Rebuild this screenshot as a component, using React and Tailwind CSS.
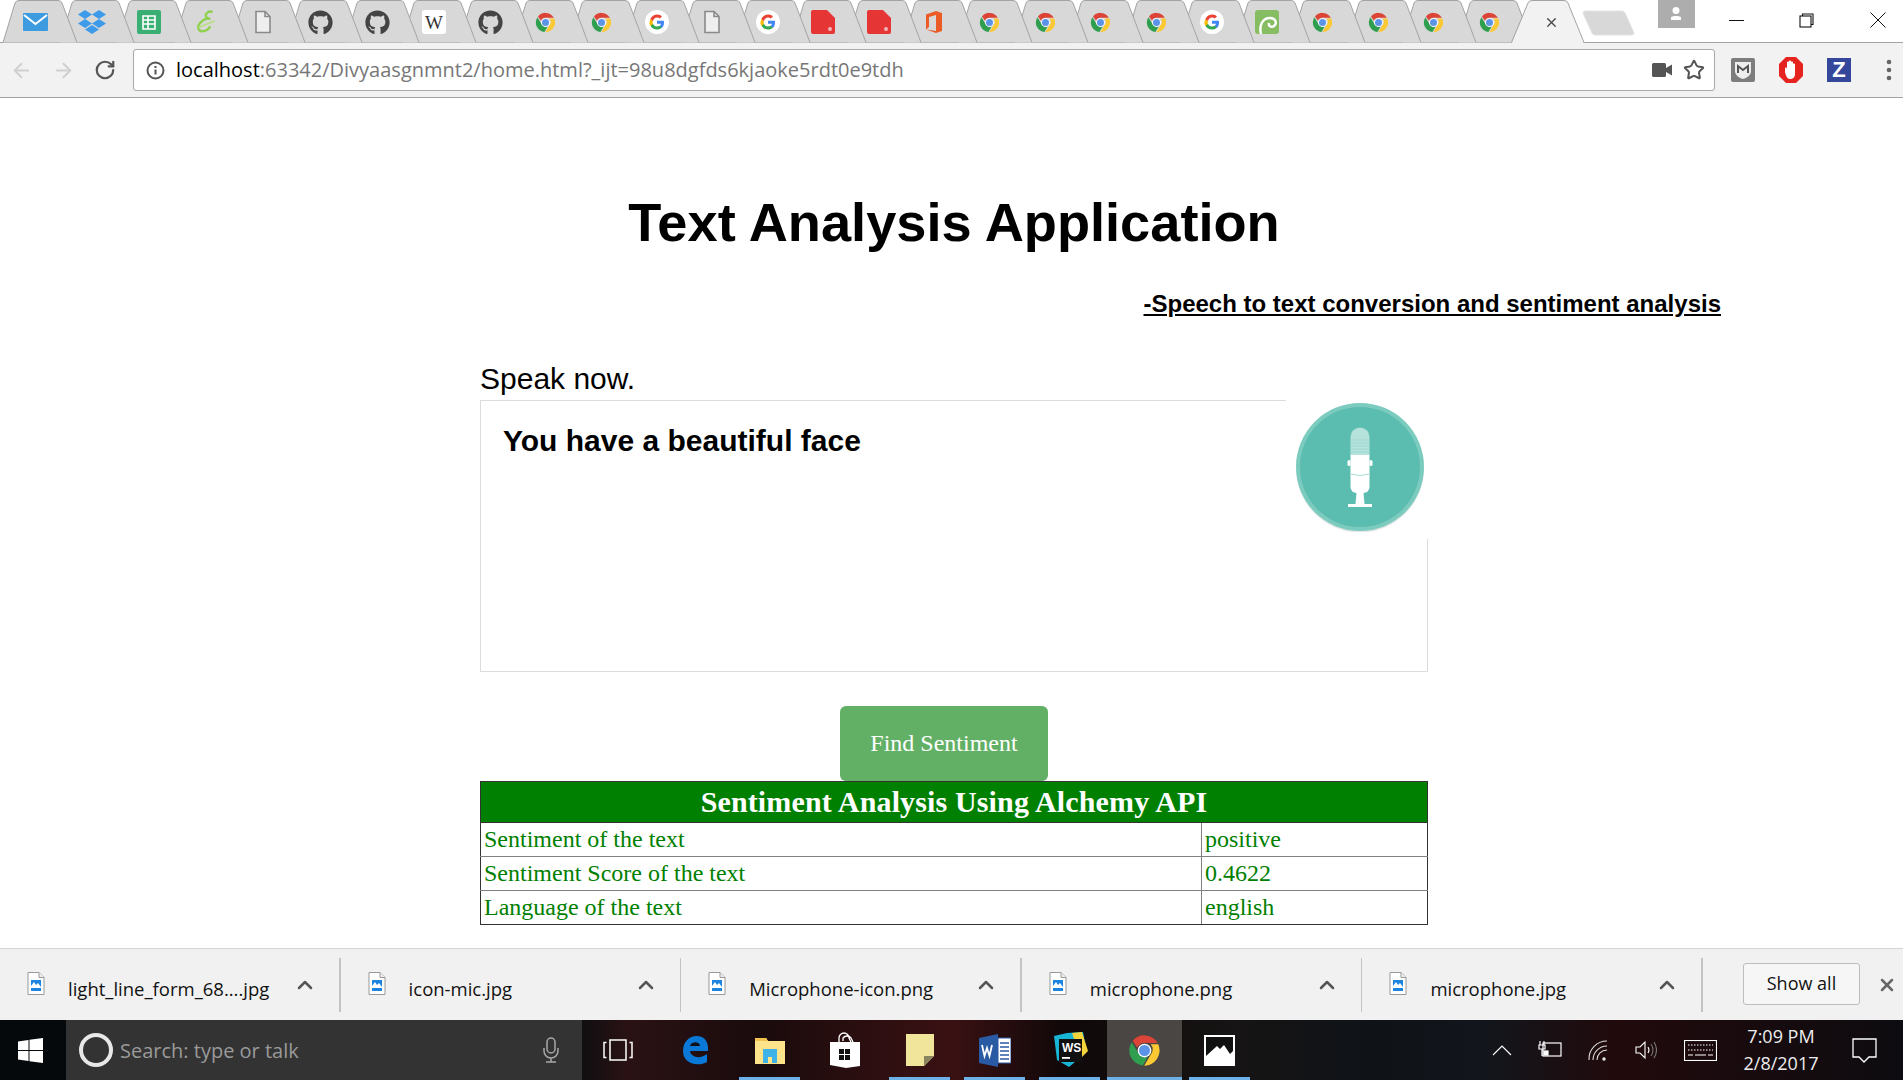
import React from 'react';
import { FaGithub, FaDropbox } from 'react-icons/fa';
import { ArrowLeft, ArrowRight, RotateCw, Star, X, ChevronUp } from 'lucide-react';

const Chrome = ({ s = 21 }) => (
  <svg width={s} height={s} viewBox="0 0 48 48">
    <path d="M24 2a22 22 0 0 1 19.05 11H24a11 11 0 0 0-10.3 7.1L6.8 10A22 22 0 0 1 24 2z" fill="#db4437" />
    <path d="M5.5 12 A22 22 0 0 0 21.5 45.9L29 33a11 11 0 0 1-14-5.5z" fill="#2f9e4f" />
    <path d="M44 15a22 22 0 0 1-20.5 31L33 30a11 11 0 0 0 0-15z" fill="#fcc934" />
    <circle cx="24" cy="24" r="10" fill="#fff" />
    <circle cx="24" cy="24" r="8" fill="#5b93e6" />
  </svg>
);

const GoogleG = () => (
  <svg width="24" height="24" viewBox="0 0 48 48">
    <circle cx="24" cy="24" r="24" fill="#fff" />
    <path d="M38 24.5c0-1-.1-2-.3-3H24v6h8c-.4 2-1.5 3.600-3.200 4.800l5 3.900c3-2.700 4.200-6.800 4.200-11.700z" fill="#4285f4" />
    <path d="M24 39c4 0 7.400-1.300 9.800-3.600l-5-3.900c-1.300.9-3 1.500-4.800 1.500-3.800 0-7-2.600-8.200-6l-5.100 4C13.100 35.800 18.200 39 24 39z" fill="#34a853" />
    <path d="M15.800 27.800a9 9 0 0 1 0-6l-5.100-4a15 15 0 0 0 0 14z" fill="#fbbc05" />
    <path d="M24 14.900c2.200 0 4.100.8 5.600 2.200l4.300-4.300A14.800 14.800 0 0 0 10.700 17.800l5.100 4c1.200-3.500 4.400-6.900 8.200-6.900z" fill="#ea4335" />
  </svg>
);

const Doc = () => (
  <svg width="18" height="24" viewBox="0 0 18 24" fill="#eeeeee" stroke="#8a8a8a" strokeWidth="1.6">
    <path d="M2 1.500h9l5 5v16H2z" />
    <path d="M11 1.500v5h5" fill="none" />
  </svg>
);

const RedDoc = () => (
  <svg width="24" height="24" viewBox="0 0 24 24">
    <path d="M2 0h14l8 8v14a2 2 0 0 1-2 2H2a2 2 0 0 1-2-2V2a2 2 0 0 1 2-2z" fill="#e53535" />
    <circle cx="19" cy="19" r="2" fill="#f4b5b5" />
  </svg>
);

const Mail = () => (
  <svg width="25" height="18" viewBox="0 0 25 18">
    <rect width="25" height="18" rx="1" fill="#3d9be0" />
    <path d="M1 2l11.500 9L24 2" fill="none" stroke="#fff" strokeWidth="2" />
  </svg>
);

const Sheets = () => (
  <svg width="24" height="24" viewBox="0 0 24 24">
    <rect width="24" height="24" rx="2" fill="#3aaf74" />
    <path d="M6 6h12v13H6zM6 10h12M6 14h12M11 6v13" fill="none" stroke="#fff" strokeWidth="1.600" />
  </svg>
);

const Swirl = () => (
  <svg width="26" height="26" viewBox="0 0 24 24" fill="none">
    <path d="M18 3c-3-2-7 1-6 4 .5 2 4 2 3 2-5-1-11 5-10 9 1 4 8 3 11-2" stroke="#8fd14f" strokeWidth="2.200" />
    <path d="M5 17l15-6" stroke="#b6e07e" strokeWidth="1.500" />
  </svg>
);

const Wiki = () => (
  <span className="flex h-[24px] w-[24px] items-center justify-center rounded-[3px] bg-white text-[19px] leading-none text-[#333]" style={{ fontFamily: '"Liberation Serif", serif' }}>W</span>
);

const Office = () => (
  <svg width="18" height="24" viewBox="0 0 18 24">
    <path d="M1 4.500L11 1l6 2v18l-6 2-10-3.500L11 21V5L4 7v10l-3 2.500z" fill="#eb5b25" />
  </svg>
);

const GreenSwirl = () => (
  <svg width="24" height="24" viewBox="0 0 24 24" fill="none">
    <rect width="24" height="24" rx="3" fill="#86bd63" />
    <path d="M6 24c-2-8 1-16 9-16 5 0 7 4 5 7s-7 2-6-2" stroke="#fff" strokeWidth="2.400" />
  </svg>
);

const Octo = () => <FaGithub size={25} color="#444" />;

const favicons = [
  <Mail />, <FaDropbox size={28} color="#3d9be9" />, <Sheets />, <Swirl />, <Doc />, <Octo />, <Octo />, <Wiki />, <Octo />,
  <Chrome />, <Chrome />, <GoogleG />, <Doc />, <GoogleG />, <RedDoc />, <RedDoc />, <Office />, <Chrome />, <Chrome />,
  <Chrome />, <Chrome />, <GoogleG />, <GreenSwirl />, <Chrome />, <Chrome />, <Chrome />, <Chrome />,
];

function Tab({ icon, z, wide }) {
  return (
    <div className={`relative flex h-[42px] shrink-0 items-center justify-center pt-[2px] ${wide ? 'w-[57px]' : 'w-[55.500px]'}`} style={{ zIndex: z }}>
      <svg className="absolute left-[-5px] top-0" width="78" height="43" viewBox="0 0 78 43">
        <path d="M1 42.500L13 3Q14 .5 17 .5L56 .5Q59 .5 60 3L75 42.500" fill="#d8d8d8" stroke="#a3a3a3" />
      </svg>
      <span className="relative flex items-center justify-center">{icon}</span>
    </div>
  );
}

function TabStrip() {
  return (
    <div className="flex h-[42px] shrink-0 bg-white pl-[6.500px]">
      {favicons.map((f, i) => <Tab key={i} icon={f} z={40 - i} wide={i < 8} />)}
      <div className="relative z-50 ml-[-1.500px] flex h-[42px] w-[60px] shrink-0 items-center justify-center pt-[2px]">
        <svg className="absolute left-[-5.500px] top-0" width="78" height="44" viewBox="0 0 78 44">
          <path d="M1.500 44L18 3Q19 .5 22 .5L54 .5Q57 .5 58 3L74 44z" fill="#f2f2f2" />
          <path d="M1.500 42.500L18 3Q19 .5 22 .5L54 .5Q57 .5 58 3L74 42.500H78" fill="none" stroke="#a3a3a3" />
        </svg>
        <X className="relative ml-[11px]" size={15} color="#444" strokeWidth={2} />
      </div>
      <svg className="ml-[6px] mt-[10px] shrink-0" width="54" height="26" viewBox="0 0 54 26">
        <path d="M3 1H40Q42 1 43 3L52 23Q52 25 50 25H13Q11 25 10 23L1 3Q1 1 3 1z" fill="#d8d8d8" stroke="#e2e2e2" />
      </svg>
      <div className="ml-[22px] flex h-[28px] w-[37px] shrink-0 items-center justify-center bg-[#adadad]">
        <svg width="16" height="16" viewBox="0 0 16 16" fill="#fff">
          <circle cx="8" cy="4.500" r="3.500" />
          <path d="M3 11l3-1h4l3 1v3H3z" />
        </svg>
      </div>
      <div className="ml-[25px] flex h-[42px] w-[34px] shrink-0 items-start justify-center pt-[20px]">
        <span className="block h-[1px] w-[15px] bg-[#111]" />
      </div>
      <div className="ml-[40px] flex h-[42px] w-[26px] shrink-0 items-start justify-center pt-[13px]">
        <svg width="15" height="15" viewBox="0 0 15 15" fill="none" stroke="#111" strokeWidth="1.100">
          <rect x="1" y="3" width="11" height="11" fill="#fff" />
          <path d="M3.500 3V1H14v10.500h-2" />
        </svg>
      </div>
      <div className="ml-[48px] flex h-[42px] w-[20px] shrink-0 items-start justify-center pt-[12px]">
        <svg width="16" height="16" viewBox="0 0 16 16" stroke="#111" strokeWidth="1"><path d="M.5.500l15 15M15.500.500l-15 15" /></svg>
      </div>
    </div>
  );
}

function Toolbar() {
  return (
    <div className="flex h-[56px] shrink-0 items-center border-y border-[#a3a3a3] bg-[#f2f2f2]">
      <ArrowLeft className="ml-[10px]" size={23} color="#cfcfcf" strokeWidth={2} />
      <ArrowRight className="ml-[19px]" size={23} color="#cfcfcf" strokeWidth={2} />
      <RotateCw className="ml-[19px]" size={22} color="#555" strokeWidth={2.400} />
      <div className="ml-[17px] flex h-[42px] w-[1582px] shrink-0 items-center rounded-[3px] border border-[#a8a8a8] bg-white">
        <svg className="ml-[12px]" width="19" height="19" viewBox="0 0 19 19" fill="none" stroke="#555" strokeWidth="2">
          <circle cx="9.500" cy="9.500" r="8" />
          <path d="M9.500 8.500v5M9.500 5v2" />
        </svg>
        <span className="ml-[11px] whitespace-nowrap text-[20px] leading-none text-[#777]" style={{ fontFamily: '"Open Sans", sans-serif' }}>
          <span className="text-black">localhost</span>:63342/Divyaasgnmnt2/home.html?_ijt=98u8dgfds6kjaoke5rdt0e9tdh
        </span>
        <svg className="ml-auto" width="20" height="14" viewBox="0 0 20 14" fill="#555">
          <rect width="14" height="14" rx="1.500" />
          <path d="M14 5l6-3.500v11L14 9z" />
        </svg>
        <Star className="ml-[11px] mr-[9px]" size={22} color="#555" strokeWidth={2.200} />
      </div>
      <svg className="ml-[16px]" width="24" height="24" viewBox="0 0 24 24">
        <rect width="24" height="24" rx="2" fill="#7d7d7d" />
        <path d="M4 4h16v9c0 4-4 7-8 8-4-1-8-4-8-8z" fill="#eee" />
        <path d="M7 15V8l5 4 5-4v7" fill="none" stroke="#555" strokeWidth="2" />
      </svg>
      <svg className="ml-[24px]" width="24" height="26" viewBox="0 0 24 26">
        <path d="M7 0h10l7 7v12l-7 7H7l-7-7V7z" fill="#e52420" />
        <path d="M6 15v-4c1-1 2 0 2 1V5c1-1 2 0 2 0V4c1-1 2 0 2 0v1c1-1 2 0 2 0v2c1-1 2 0 2 0v10c0 3-2 5-5 5s-4-3-5-7z" fill="#fff" />
      </svg>
      <span className="ml-[24px] flex h-[24px] w-[24px] items-center justify-center bg-[#34479b] text-[22px] font-bold leading-none text-white" style={{ fontFamily: '"Liberation Sans", sans-serif' }}>Z</span>
      <svg className="ml-[35px]" width="6" height="22" viewBox="0 0 6 22" fill="#666">
        <circle cx="3" cy="3" r="2.300" />
        <circle cx="3" cy="11" r="2.300" />
        <circle cx="3" cy="19" r="2.300" />
      </svg>
    </div>
  );
}

function MicBadge() {
  return (
    <div className="absolute right-[-3px] top-[-1px] flex h-[139px] w-[144px] items-start justify-center bg-white pl-[3px] pt-[2px]">
      <svg width="130" height="130" viewBox="0 0 130 130">
        <circle cx="65" cy="66.500" r="64" fill="#d8d8d8" opacity="0.6" />
        <circle cx="65" cy="65" r="64" fill="#7ccbbf" />
        <circle cx="65" cy="65" r="60" fill="#5bbcb0" />
        <path d="M55.500 35a9.500 9.500 0 0 1 19 0v18h-19z" fill="#b5e2db" />
        <path d="M56 38h18M56 41h18M56 44h18M56 47h18M56 50h18" stroke="#9ed8cf" strokeWidth="1" />
        <path d="M55.500 53h19v32a6 6 0 0 1-6 6h-7a6 6 0 0 1-6-6z" fill="#fff" />
        <path d="M56 72q9 3 18 0" fill="none" stroke="#a8dcd4" strokeWidth="1" />
        <rect x="52.500" y="58" width="3" height="6" rx="1.500" fill="#fff" />
        <rect x="74.500" y="58" width="3" height="6" rx="1.500" fill="#fff" />
        <path d="M61.500 91h7l1 11h-9z" fill="#fff" />
        <rect x="53" y="102" width="24" height="3" fill="#fff" />
      </svg>
    </div>
  );
}

function Content() {
  const rows = [
    ['Sentiment of the text', 'positive'],
    ['Sentiment Score of the text', '0.4622'],
    ['Language of the text', 'english'],
  ];
  return (
    <main className="min-h-0 flex-1 overflow-hidden bg-white" style={{ fontFamily: '"Liberation Sans", Arial, sans-serif' }}>
      <h1 className="mt-[94px] pl-[5px] text-center text-[54.200px] font-bold leading-[60px] text-black">Text Analysis Application</h1>
      <p className="mt-[37px] pr-[182px] text-right text-[24px] font-bold leading-[30px] text-black underline">-Speech to text conversion and sentiment analysis</p>
      <div className="ml-[480px] w-[948px]">
        <p className="mt-[42px] text-[30px] leading-[36px] text-black">Speak now.</p>
        <div className="relative mt-[3px] h-[272px] border border-[#dcdcdc] px-[22px] py-[20px] text-[30px] font-bold leading-[40px] text-black">
          You have a beautiful face
          <MicBadge />
        </div>
        <button className="ml-[360px] mt-[34px] block h-[75px] w-[208px] rounded-[6px] bg-[#62b065] pb-[2px] text-[24px] text-white" style={{ fontFamily: '"Liberation Serif", serif' }}>Find Sentiment</button>
        <table className="w-[947px] table-fixed border-collapse border border-[#333]" style={{ fontFamily: '"Liberation Serif", serif' }}>
          <colgroup>
            <col className="w-[721px]" />
            <col className="w-[226px]" />
          </colgroup>
          <thead>
            <tr>
              <th colSpan={2} className="h-[41px] border border-[#333] bg-[#008000] p-0 text-[30px] font-bold leading-[36px] tracking-[0.14px] text-white">Sentiment Analysis Using Alchemy API</th>
            </tr>
          </thead>
          <tbody>
            {rows.map(([a, b], i) => (
              <tr key={a} className="h-[34px] text-[24px] leading-none text-[#008000]">
                <td className={`border border-[#808080] border-l-[#333] px-[3px] pb-[2px] pt-0 ${i === 2 ? 'border-b-[#333]' : ''}`}>{a}</td>
                <td className={`border border-[#808080] border-r-[#333] px-[3px] pb-[2px] pt-0 ${i === 2 ? 'border-b-[#333]' : ''}`}>{b}</td>
              </tr>
            ))}
          </tbody>
        </table>
      </div>
    </main>
  );
}

const FileIcon = () => (
  <svg className="mt-[-2px] shrink-0" width="18" height="23" viewBox="0 0 18 23">
    <path d="M1 .500h11l5 5V22.500H1z" fill="#fff" stroke="#999" />
    <path d="M12 .500v5h5" fill="#eee" stroke="#999" />
    <rect x="4" y="8" width="10" height="11" fill="#1d84e0" />
    <path d="M4 14l3-4 2 3 2-2 3 4v1H4z" fill="#fff" />
  </svg>
);

function DownloadItem({ name, thin }) {
  return (
    <div className="flex h-[54px] w-[340.600px] shrink-0 items-center pl-[27px]">
      <FileIcon />
      <span className="ml-[23px] mt-[10px] flex-1 whitespace-nowrap text-[18.500px] leading-none text-[#111]" style={{ fontFamily: '"Open Sans", sans-serif' }}>{name}</span>
      <ChevronUp className="mr-[22px]" size={24} color="#555" strokeWidth={2.500} />
      <div className={`h-[54px] bg-[#c4c4c4] ${thin ? 'w-[1px]' : 'w-[2px]'}`} />
    </div>
  );
}

function DownloadBar() {
  return (
    <div className="flex h-[72px] shrink-0 items-center border-t border-[#d4d4d4] bg-[#f1f1f1]">
      <DownloadItem name="light_line_form_68....jpg" />
      <DownloadItem name="icon-mic.jpg" thin />
      <DownloadItem name="Microphone-icon.png" />
      <DownloadItem name="microphone.png" thin />
      <DownloadItem name="microphone.jpg" />
      <button className="ml-[40px] mt-[-2px] h-[42px] w-[117px] rounded-[3px] border border-[#bdbdbd] bg-[#f6f6f6] text-[18px] text-[#111]" style={{ fontFamily: '"Open Sans", sans-serif' }}>Show all</button>
      <X className="ml-[17px]" size={20} color="#666" strokeWidth={3} />
    </div>
  );
}

const Cell = ({ children, active, bar = true }) => (
  <div className={`relative flex h-[60px] w-[75px] shrink-0 items-center justify-center ${active ? 'bg-[#4a4644]' : ''}`}>
    {children}
    {bar && <span className={`absolute bottom-0 h-[3px] bg-[#6cb2e8] ${active ? 'w-[75px]' : 'w-[61px]'}`} />}
  </div>
);

function Taskbar() {
  return (
    <div className="flex h-[60px] shrink-0 items-center bg-[linear-gradient(90deg,#0a0d10_0%,#0a0d10_30%,#2a1214_33%,#1a0b0c_40%,#3a1113_50%,#100809_56%,#161414_65%,#0f1318_72%,#12161c_78%,#210a0c_85%,#0d0c10_100%)] text-white">
      <div className="flex h-[60px] w-[66px] shrink-0 items-center justify-center bg-[#06090c] pr-[5px]">
        <svg width="25" height="25" viewBox="0 0 25 25" fill="#fff">
          <path d="M0 3.500l10.500-1.500v10H0zM11.500 1.800L25 0v12H11.500zM0 13h10.500v10L0 21.500zM11.500 13H25v12l-13.500-1.800z" />
        </svg>
      </div>
      <div className="flex h-[60px] w-[516px] shrink-0 items-center bg-[#333333]">
        <span className="ml-[13px] block h-[34px] w-[34px] rounded-full border-[4px] border-[#e8e8e8]" />
        <span className="ml-[7px] mt-[2px] text-[20px] leading-none text-[#9a9a9a]" style={{ fontFamily: '"Open Sans", sans-serif' }}>Search: type or talk</span>
        <svg className="ml-auto mr-[22px]" width="18" height="26" viewBox="0 0 18 26" fill="none" stroke="#a8a8a8" strokeWidth="1.500">
          <rect x="5" y="1" width="8" height="15" rx="4" />
          <path d="M2 11v3a7 7 0 0 0 14 0v-3M9 21v4M4 25h10" />
        </svg>
      </div>
      <Cell bar={false}>
        <svg className="mr-[4px]" width="30" height="22" viewBox="0 0 30 22" fill="none" stroke="#fff" strokeWidth="1.500">
          <rect x="7" y="1" width="16" height="20" />
          <path d="M3.500 3.500H1v15h2.500M26.500 3.500H29v15h-2.500" />
        </svg>
      </Cell>
      <Cell bar={false}>
        <svg width="30" height="32" viewBox="0 0 30 32" fill="none">
          <path d="M3 17C3 8 9 2 17 2c7 0 11 5 11 12v3H10c1 7 11 8 17 3v8c-9 5-24 2-24-11z" fill="#0a78d7" />
          <path d="M10 12h10c0-5-9-5-10 0z" fill="#10101a" />
        </svg>
      </Cell>
      <Cell>
        <svg width="32" height="30" viewBox="0 0 32 30">
          <path d="M1 3h11l2 3h17v23H1z" fill="#fde48a" />
          <path d="M1 3h11l2 3H1z" fill="#f2c14e" />
          <path d="M9 28V17h14v11h-5v-6h-4v6z" fill="#3fb2e8" />
          <rect x="9" y="14" width="14" height="5" fill="#3fb2e8" />
        </svg>
      </Cell>
      <Cell bar={false}>
        <svg width="32" height="36" viewBox="0 0 32 36">
          <path d="M1 10h30v24l-14 2-16-3z" fill="#fff" />
          <path d="M10 10V6a5 5 0 0 1 10 0l2 4M14 9V6a5 5 0 0 1 8 0l2 4" fill="none" stroke="#fff" strokeWidth="1.300" />
          <path d="M10 17h5v5h-5zM16 17h5v5h-5zM10 23h5v5h-5zM16 23h5v5h-5z" fill="#111" />
        </svg>
      </Cell>
      <Cell>
        <svg width="28" height="32" viewBox="0 0 28 32">
          <path d="M0 0h28v22L18 32H0z" fill="#f1e59b" />
          <path d="M28 22H18v10z" fill="#8a8460" />
        </svg>
      </Cell>
      <Cell>
        <svg width="32" height="34" viewBox="0 0 32 34">
          <path d="M19 1L0 5v25l19 4z" fill="#2b5aa4" />
          <rect x="19" y="5" width="13" height="25" fill="#fff" stroke="#2b5aa4" />
          <path d="M21 10h9M21 14h9M21 18h9M21 22h9M21 26h9" stroke="#2b5aa4" strokeWidth="1.500" />
          <path d="M3 12l2.500 11 2.500-8 2.500 8L13 12" fill="none" stroke="#fff" strokeWidth="1.800" />
        </svg>
      </Cell>
      <Cell>
        <svg width="36" height="36" viewBox="0 0 36 36">
          <path d="M2 4l13-3 16-1 2 11-4 14-12 10-12-7z" fill="#19b5d4" />
          <path d="M20 1l10-1 6 19-7 7z" fill="#f3d43c" />
          <rect x="7" y="7" width="23" height="23" fill="#111" />
          <text x="10" y="20" fontSize="12" fontWeight="700" fill="#fff" fontFamily="Liberation Sans, sans-serif">WS</text>
          <rect x="10" y="25" width="8" height="1.800" fill="#fff" />
        </svg>
      </Cell>
      <Cell active><Chrome s={33} /></Cell>
      <Cell>
        <svg width="33" height="33" viewBox="0 0 33 33">
          <path d="M1 1h31v31H1z" fill="#fff" />
          <path d="M3 3h27v14l-3 3-6-9-4 4-3-3-11 10z" fill="#111" />
        </svg>
      </Cell>
      <div className="flex-1" />
      <div className="flex w-[48px] justify-center"><svg width="20" height="11" viewBox="0 0 20 11" fill="none" stroke="#fff" strokeWidth="1.200"><path d="M1 10L10 1l9 9" /></svg></div>
      <div className="flex w-[48px] justify-center">
        <svg width="24" height="20" viewBox="0 0 24 20" fill="none" stroke="#fff" strokeWidth="1.200">
          <rect x="5" y="3" width="18" height="13" />
          <path d="M2 1v4M6 1v4M1 5h6v4H1zM4 9v7" />
          <rect x="6" y="11" width="4" height="4" fill="#fff" />
        </svg>
      </div>
      <div className="flex w-[48px] justify-center">
        <svg width="20" height="21" viewBox="0 0 20 21" fill="none" stroke="#ddd" strokeWidth="1.100">
          <path d="M1 20A18 18 0 0 1 19 1M5 20A14 14 0 0 1 19 6M9 20a10 10 0 0 1 10-10" />
          <circle cx="16" cy="19" r="1.200" fill="#fff" />
        </svg>
      </div>
      <div className="flex w-[48px] justify-center">
        <svg width="22" height="20" viewBox="0 0 22 20" fill="none" stroke="#fff" strokeWidth="1.100">
          <path d="M1 7h4l5-5v16l-5-5H1z" />
          <path d="M13 7q2 3 0 6" />
          <path d="M16 4q4 6 0 12M19 2q5 8 0 16" stroke="#777" />
        </svg>
      </div>
      <div className="flex w-[60px] justify-center">
        <svg width="33" height="21" viewBox="0 0 33 21" fill="none" stroke="#fff" strokeWidth="1.100">
          <rect x=".5" y=".5" width="32" height="20" />
          <path d="M4 5h25M4 10h25" strokeDasharray="1.500 1.500" />
          <path d="M4 15h5M11 15h11M24 15h5" />
        </svg>
      </div>
      <div className="flex w-[102px] flex-col items-center text-[18px] leading-[27px] text-[#eee]" style={{ fontFamily: '"Open Sans", sans-serif' }}>
        <span>7:09 PM</span>
        <span>2/8/2017</span>
      </div>
      <div className="flex w-[64px] justify-center">
        <svg width="25" height="25" viewBox="0 0 25 25" fill="none" stroke="#fff" strokeWidth="1.300"><path d="M1 1h23v18h-7l-5 5-5-5H1z" /></svg>
      </div>
      <div className="w-[7px]" />
    </div>
  );
}

export default function App() {
  return (
    <div className="flex h-screen w-full flex-col overflow-hidden bg-white">
      <TabStrip />
      <Toolbar />
      <Content />
      <DownloadBar />
      <Taskbar />
    </div>
  );
}
